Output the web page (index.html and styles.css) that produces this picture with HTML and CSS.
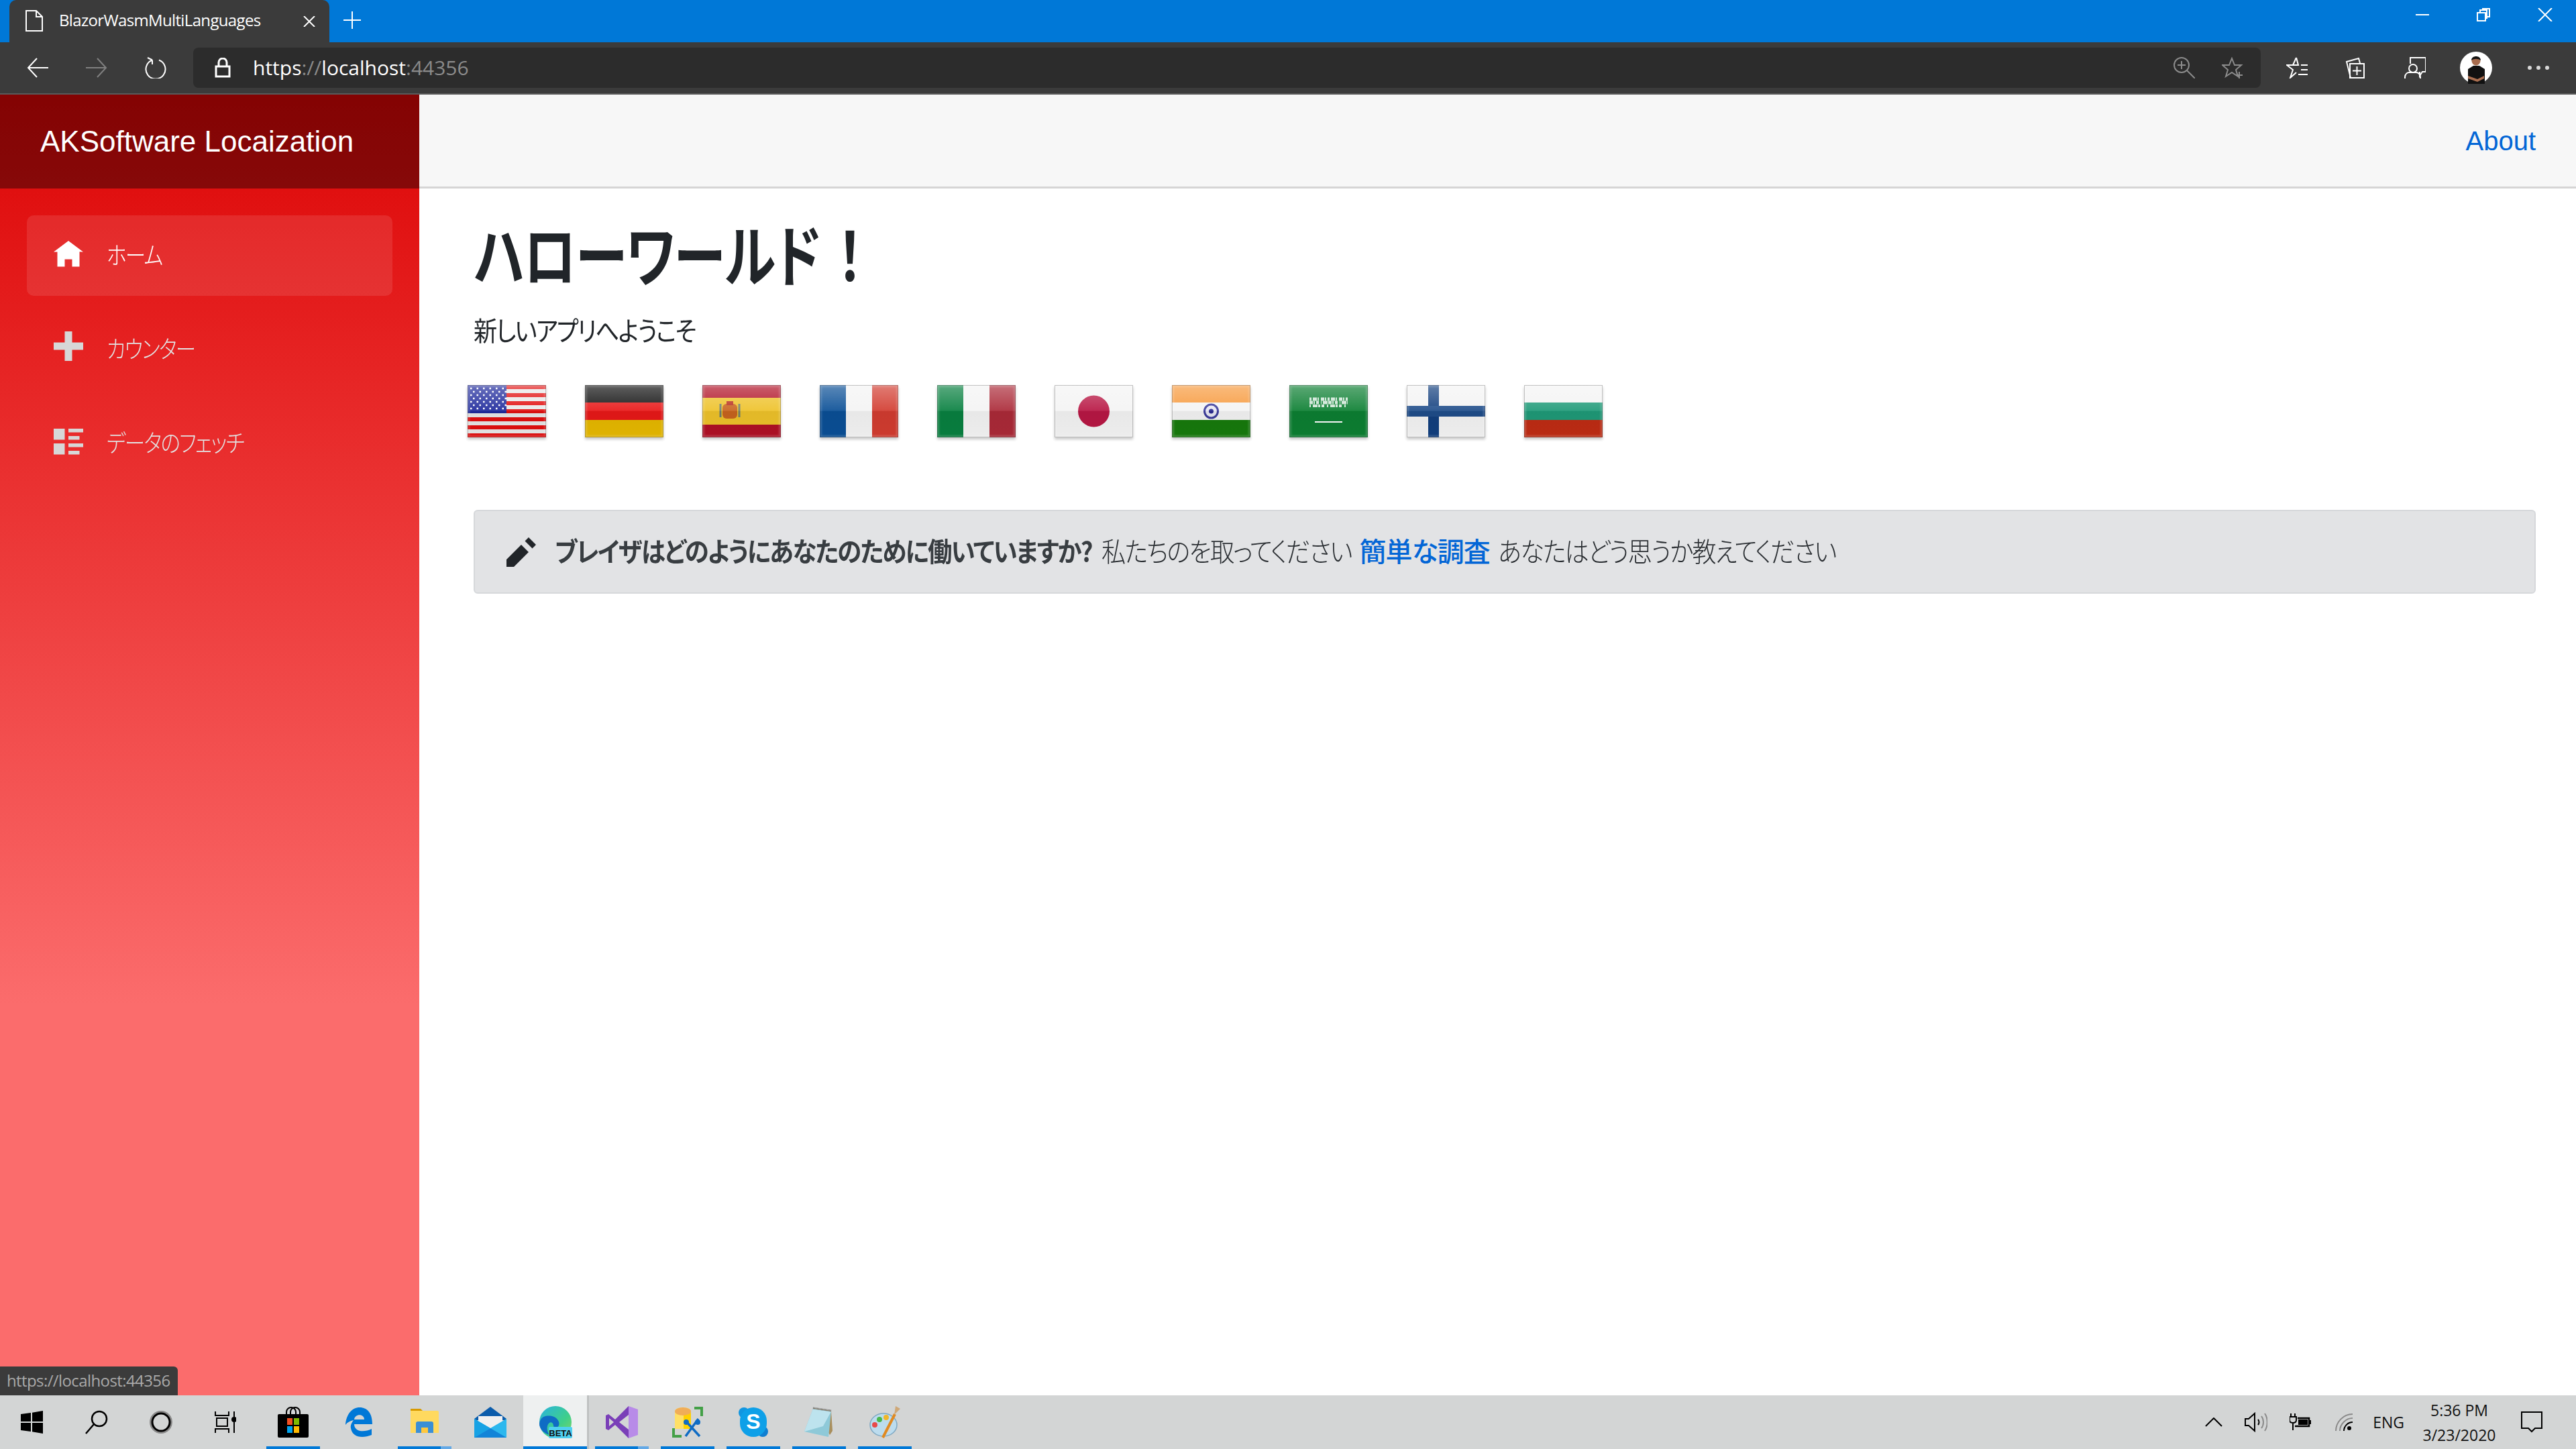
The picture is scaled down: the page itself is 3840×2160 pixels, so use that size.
FILE: index.html
```html
<!DOCTYPE html>
<html lang="ja">
<head>
<meta charset="utf-8">
<title>BlazorWasmMultiLanguages</title>
<link rel="stylesheet" href="styles.css">
</head>
<body>
<div class="tabbar">
  <div class="tab">
    <svg class="i-page" width="26" height="32" viewBox="0 0 26 32" fill="none" stroke="#fff" stroke-width="2"><path d="M1 1h15l9 9v21H1zM16 1v9h9"/></svg>
    <span class="tab-title">BlazorWasmMultiLanguages</span>
    <svg class="i-close" width="18" height="16" viewBox="0 0 18 16" fill="none" stroke="#fff" stroke-width="2"><path d="M1 0l16 16M17 0L1 16"/></svg>
  </div>
  <svg class="i-new" width="26" height="26" viewBox="0 0 26 26" fill="none" stroke="#fff" stroke-width="2"><path d="M13 0v26M0 13h26"/></svg>
  <div class="winctl">
    <svg width="20" height="20" viewBox="0 0 20 20" fill="#fff"><rect x="0" y="9" width="20" height="2"/></svg>
    <svg width="20" height="20" viewBox="0 0 20 20" fill="none" stroke="#fff" stroke-width="2"><path d="M1 7h12v12H1zM5 7V3h10v12h-2M8 1h11v12h-3"/></svg>
    <svg width="22" height="20" viewBox="0 0 22 20" fill="none" stroke="#fff" stroke-width="2"><path d="M1 0l20 20M21 0L1 20"/></svg>
  </div>
</div>

<div class="toolbar">
  <svg class="tb-icon" width="32" height="30" viewBox="0 0 32 30" fill="none" stroke="#fff" stroke-width="2"><path d="M15 1L2 15l13 14M2 15h30"/></svg>
  <svg class="tb-icon" width="32" height="30" viewBox="0 0 32 30" fill="none" stroke="#808080" stroke-width="2"><path d="M17 1l13 14-13 14M30 15H0"/></svg>
  <svg class="tb-icon" width="32" height="32" viewBox="0 0 32 32" fill="none" stroke="#fff" stroke-width="2"><path d="M21 4.500a14.500 14.500 0 1 1-10 0M11 4.500V11M4 1l7 3.500"/></svg>
  <div class="addr">
    <svg class="i-lock" width="24" height="30" viewBox="0 0 24 30" fill="none" stroke="#fff" stroke-width="3"><path d="M2 13h20v15H2zM6 13V7a6 6 0 0 1 12 0v6"/></svg>
    <span class="url"><span>https</span><span class="dim">://</span><span>localhost</span><span class="dim">:44356</span></span>
    <svg class="addr-end" width="32" height="32" viewBox="0 0 32 32" fill="none" stroke="#8b8b8b" stroke-width="2"><circle cx="12" cy="12" r="11"/><path d="M20 20l12 12M12 6v12M6 12h12"/></svg>
    <svg class="addr-star" width="32" height="32" viewBox="0 0 32 32" fill="none" stroke="#8b8b8b" stroke-width="2"><path d="M15 2l4 10h10l-8 7 3 10-9-6-9 6 3-10-8-7h10zM26 22v10M21 27h10"/></svg>
  </div>
  <svg class="tb-right" width="32" height="32" viewBox="0 0 32 32" fill="none" stroke="#fff" stroke-width="2"><path d="M15 1l3 11H1l9 7-4 12 9-8M22 12h10M22 19h10M18 26h14"/><path d="M15 1l-5 11"/></svg>
  <svg class="tb-right tb-coll" width="32" height="32" viewBox="0 0 32 32" fill="none" stroke="#fff" stroke-width="2"><path d="M8 31h2L4 7l18-5 2 7"/><path d="M9 10h21v21H9zM19.500 14v13M13 20.500h13"/></svg>
  <svg class="tb-right tb-feed" width="32" height="32" viewBox="0 0 32 32" fill="none" stroke="#fff" stroke-width="2"><path d="M9 10V1h23v21h-5l-4 6v-6"/><circle cx="13" cy="17" r="6"/><path d="M1 32v-2c0-5 4-7 6-7h11c3 0 6 3 6 7v2"/></svg>
  <svg class="avatar" width="48" height="48" viewBox="0 0 48 48"><circle cx="24" cy="24" r="24" fill="#fff"/><path d="M12 48V26l8-5h9l8 5v22z" fill="#111"/><circle cx="24" cy="14" r="6.500" fill="#a86d4f"/><path d="M17 13c0-8 14-8 14 0-4-3-10-3-14 0z" fill="#111"/><path d="M12 36l14 5 10-5v4l-10 5-14-5z" fill="#a86d4f"/></svg>
  <div class="dots"><i></i><i></i><i></i></div>
</div>

<div class="main">
  <aside class="sidebar">
    <div class="brand">AKSoftware Locaization</div>
    <nav class="nav">
      <a class="nav-item active"><svg class="nav-icon" viewBox="0 0 8 8"><path d="M4 0l-4 3h1v4h2v-2h2v2h2v-4.030l1 .03-4-3z"/></svg><span>ホーム</span></a>
      <a class="nav-item"><svg class="nav-icon nav-icon-up" viewBox="0 0 8 8"><path d="M3 0v3h-3v2h3v3h2v-3h3v-2h-3v-3h-2z"/></svg><span>カウンター</span></a>
      <a class="nav-item"><svg class="nav-icon" viewBox="0 0 8 8"><path d="M0 0v3h3v-3h-3zm4 0v1h4v-1h-4zm0 2v1h3v-1h-3zm-4 2v3h3v-3h-3zm4 0v1h4v-1h-4zm0 2v1h3v-1h-3z"/></svg><span>データのフェッチ</span></a>
    </nav>
  </aside>
  <section class="content">
    <header class="topbar"><a class="about">About</a></header>
    <div class="body">
      <h1 class="title">ハローワールド<span class="bang">！</span></h1>
      <p class="lead">新しいアプリへようこそ</p>
      <div class="flags">
        <div class="flag"><svg viewBox="0 0 117 78"><rect width="117" height="78" fill="#e8e8e8"/><path d="M0 3h117M0 15h117M0 27h117M0 39h117M0 51h117M0 63h117M0 75h117" stroke="#e20f0f" stroke-width="6"/><rect width="58" height="42" fill="#1f2a9c"/><path d="M4 5h54M8 10h50M4 15h54M8 20h50M4 25h54M8 30h50M4 35h54" stroke="#fff" stroke-width="2.500" stroke-dasharray="2.500 7"/></svg></div>
        <div class="flag"><svg viewBox="0 0 117 78"><rect width="117" height="26" fill="#111"/><rect y="26" width="117" height="26" fill="#e81818"/><rect y="52" width="117" height="26" fill="#e6b800"/></svg></div>
        <div class="flag"><svg viewBox="0 0 117 78"><rect width="117" height="78" fill="#b01025"/><rect y="19" width="117" height="40" fill="#eec22a"/><rect x="30" y="28" width="22" height="22" rx="6" fill="#c8641e"/><rect x="36" y="24" width="10" height="6" fill="#b83020"/><path d="M27 28v20M55 28v20" stroke="#708070" stroke-width="3"/></svg></div>
        <div class="flag"><svg viewBox="0 0 117 78"><rect width="39" height="78" fill="#0a4f96"/><rect x="39" width="39" height="78" fill="#f4f4f4"/><rect x="78" width="39" height="78" fill="#d23c30"/></svg></div>
        <div class="flag"><svg viewBox="0 0 117 78"><rect width="39" height="78" fill="#088040"/><rect x="39" width="39" height="78" fill="#f4f4f4"/><rect x="78" width="39" height="78" fill="#ab2a38"/></svg></div>
        <div class="flag"><svg viewBox="0 0 117 78"><rect width="117" height="78" fill="#f4f4f4"/><circle cx="58.500" cy="39" r="23.500" fill="#b81744"/></svg></div>
        <div class="flag"><svg viewBox="0 0 117 78"><rect width="117" height="26" fill="#f79a3e"/><rect y="26" width="117" height="26" fill="#f4f4f4"/><rect y="52" width="117" height="26" fill="#177a0c"/><circle cx="58.500" cy="39" r="10" fill="#e8e8f4" stroke="#3d3d9c" stroke-width="3"/><circle cx="58.500" cy="39" r="3.500" fill="#2a2a90"/></svg></div>
        <div class="flag"><svg viewBox="0 0 117 78"><rect width="117" height="78" fill="#0c7f32"/><g class="saudi" fill="none" stroke="#fff"><path d="M30 21h57" stroke-width="5" stroke-dasharray="3 2 6 1 2 3 5 1 2 2"/><path d="M30 26h57" stroke-width="5" stroke-dasharray="5 1 2 2 4 3 1 2 7 1"/><path d="M30 31h57" stroke-width="4" stroke-dasharray="2 3 7 1 3 2 4 4"/></g><path d="M38 55h36M74 55h5" stroke="#fff" stroke-width="2"/></svg></div>
        <div class="flag"><svg viewBox="0 0 117 78"><rect width="117" height="78" fill="#f4f4f4"/><rect x="32" width="16" height="78" fill="#123f7e"/><rect y="31" width="117" height="16" fill="#1f4d8a"/></svg></div>
        <div class="flag"><svg viewBox="0 0 117 78"><rect width="117" height="26" fill="#f4f4f4"/><rect y="26" width="117" height="26" fill="#1f9a78"/><rect y="52" width="117" height="26" fill="#bf2c14"/></svg></div>
      </div>
      <div class="alert">
        <svg class="alert-icon" viewBox="0 0 8 8"><path d="M6 0l-1 1 2 2 1-1-2-2zm-2 2l-4 4v2h2l4-4-2-2z"/></svg>
        <strong class="a-strong">ブレイザはどのようにあなたのために働いていますか?</strong>
        <span class="a-one">私たちのを取ってください</span>
        <a class="a-link">簡単な調査</a>
        <span class="a-two">あなたはどう思うか教えてください</span>
      </div>
    </div>
  </section>
</div>

<div class="status">https://localhost:44356</div>

<footer class="taskbar">
  <div class="sys"><svg width="34" height="34" viewBox="0 0 34 34" fill="#000"><path d="M0 5l15-2v13H0zM17 2.700L33 0v16H17zM0 18h15v13L0 29zM17 18h16v16l-16-2.700z"/></svg></div>
  <div class="sys"><svg width="34" height="36" viewBox="0 0 34 36" fill="none" stroke="#000" stroke-width="2.500"><circle cx="21" cy="13" r="11"/><path d="M13 21L1 35"/></svg></div>
  <div class="sys"><svg width="34" height="34" viewBox="0 0 34 34" fill="none"><circle cx="17" cy="17" r="15" stroke="#8a8a8a" stroke-width="4"/><circle cx="17" cy="17" r="13" stroke="#000" stroke-width="3"/></svg></div>
  <div class="sys"><svg width="32" height="32" viewBox="0 0 32 32" fill="none" stroke="#000" stroke-width="2"><path d="M1 0v6h20V0M3 10h16v12H3zM1 32v-6h20v6M29 0v8M29 16v16"/><circle cx="29" cy="12" r="3" fill="#000"/></svg></div>
  <div class="tasks">
    <div class="task on"><svg width="46" height="46" viewBox="0 0 46 46"><rect y="11" width="46" height="35" rx="2" fill="#000"/><path d="M13 14V8a7 7 0 0 1 14 0v6M19 14V8a7 7 0 0 1 14 0v6" fill="none" stroke="#000" stroke-width="2"/><rect x="14" y="17" width="8" height="10" fill="#f25022"/><rect x="24" y="17" width="8" height="10" fill="#7fba00"/><rect x="14" y="29" width="8" height="10" fill="#00a4ef"/><rect x="24" y="29" width="8" height="10" fill="#ffb900"/></svg></div>
    <div class="task"><svg width="40" height="44" viewBox="0 0 40 44"><path d="M0 26C1 10 10 0 21 0c12 0 19 9 19 25H13c0 11 14 13 26 7v9c-15 6-29 3-31-10-1-4 1-8 4-12-5 1-9 3-12 7zM13 18h15c0-9-14-9-15 0z" fill="#0078d7"/></svg></div>
    <div class="task on half"><svg width="42" height="48" viewBox="0 0 42 48"><path d="M0 4h15l3 3H0z" fill="#d89a00"/><path d="M0 7h40a2 2 0 0 1 2 2v31H0z" fill="#ffd95f"/><path d="M8 40V26c0-2 1-3 3-3h20c2 0 3 1 3 3v14h-8v-8H16v8z" fill="#3b8fd6"/><rect x="16" y="32" width="10" height="8" fill="#ffc83d"/></svg></div>
    <div class="task"><svg width="48" height="46" viewBox="0 0 48 46"><path d="M24 0l24 18v2H0v-2z" fill="#0b5cab"/><path d="M6 14h36v14L24 36 6 28z" fill="#f0f0f0"/><path d="M0 18l24 14 24-14v28H0z" fill="#2db8ee"/><path d="M0 18l24 14L0 46z" fill="#17a2e4"/><path d="M48 46H0l24-14 24 14z" fill="#1284d8"/></svg></div>
    <div class="task active"><svg width="50" height="48" viewBox="0 0 50 48"><defs><linearGradient id="eb" x1="0" y1="0" x2="1" y2="1"><stop offset="0" stop-color="#2ab3e0"/><stop offset=".6" stop-color="#3ecf8a"/><stop offset="1" stop-color="#86d562"/></linearGradient></defs><circle cx="25" cy="24" r="24" fill="url(#eb)"/><path d="M1 26C3 14 12 14 20 15c8 2 12 9 10 14-2 4-8 4-8 0 0-3-3-6-6-4-4 3-5 11 0 18C7 40 1 34 1 26z" fill="#0f6cc4"/><rect x="15" y="31" width="35" height="17" rx="2" fill="#4fd0f0"/><text x="32.500" y="44.500" class="beta">BETA</text></svg></div>
    <div class="task on half2"><svg width="48" height="48" viewBox="0 0 48 48"><path d="M34 0L14 20 4 12 0 14v20l4 2 10-8 20 20z" fill="#7a3fb8"/><path d="M5 18v12l7-6zM34 13v22L20 24z" fill="#d3d5d5"/><path d="M34 0l14 5v38l-14 5z" fill="#b88be8"/></svg></div>
    <div class="task on"><svg width="46" height="46" viewBox="0 0 46 46"><path d="M4 7c0-8 24-8 24 0v26H4z" fill="#ffe066"/><path d="M17 3c6 0 11 1 11 4v26H17z" fill="#ffd200"/><ellipse cx="16" cy="7" rx="12" ry="6" fill="#f0ad58"/><path d="M33 0h13v14h-4V4h-9zM0 32h4v10h10v4H0z" fill="#43a047"/><path d="M19 20l22 24M39 18L20 44" stroke="#0f6cc4" stroke-width="3.500" fill="none"/><circle cx="21" cy="23" r="4" fill="#0f6cc4"/><circle cx="38" cy="23" r="4" fill="#0f6cc4"/></svg></div>
    <div class="task on"><svg width="44" height="48" viewBox="0 0 44 48"><circle cx="8" cy="10" r="8" fill="#1296e0"/><circle cx="36" cy="38" r="8" fill="#0f7fd1"/><rect x="2" y="2" width="40" height="44" rx="20" fill="#0ea0e8"/><text x="22" y="34" class="skype">S</text></svg></div>
    <div class="task on"><svg width="44" height="46" viewBox="0 0 44 46"><path d="M13 2l27 4 2 30-4 6z" fill="#a98f5d"/><path d="M13 3l27 4-4 38L0 37z" fill="#8ec9d8"/><path d="M13 3l27 4-12 22-28 8z" fill="#bde3ee"/><path d="M13 2l27 4" stroke="#666" stroke-width="3" stroke-dasharray="1 1"/></svg></div>
    <div class="task on"><svg width="46" height="48" viewBox="0 0 46 48"><ellipse cx="21" cy="28" rx="20" ry="17" fill="#bcdcee" stroke="#7fa8c2" stroke-width="1.500"/><ellipse cx="27" cy="35" rx="5" ry="4" fill="#d3d5d5"/><circle cx="8" cy="28" r="4" fill="#e84a4a"/><circle cx="15" cy="20" r="4" fill="#4cb84c"/><circle cx="25" cy="17" r="4" fill="#f0b62a"/><path d="M38 12L20 47" stroke="#e08a22" stroke-width="4"/><path d="M37 13l2-13 7 4z" fill="#cfa877"/></svg></div>
  </div>
  <div class="tray">
    <svg class="t-chev" width="26" height="14" viewBox="0 0 26 14" fill="none" stroke="#000" stroke-width="2"><path d="M1 13L13 1l12 12"/></svg>
    <svg class="t-vol" width="34" height="30" viewBox="0 0 34 30" fill="none" stroke="#000" stroke-width="2"><path d="M1 10h5l9-8v26l-9-8H1z"/><path d="M20 11c2 2 2 6 0 8"/><path d="M25 6c4 5 4 13 0 18M30 2c5 7 5 19 0 26" stroke="#8a8a8a"/></svg>
    <svg class="t-bat" width="32" height="26" viewBox="0 0 32 26" fill="none"><path d="M2 0v5M8 0v5M0 5h10v5c0 3-2 4-5 4s-5-1-5-4zM5 14v11" stroke="#000" stroke-width="2"/><path d="M8 19h21V7H12" stroke="#000" stroke-width="2.500"/><rect x="13" y="9" width="14" height="8" fill="#000"/><rect x="30" y="10" width="2" height="6" fill="#000"/></svg>
    <svg class="t-wifi" width="26" height="26" viewBox="0 0 26 26" fill="none" stroke="#8a8a8a" stroke-width="2"><path d="M1 26C1 13 12 1 26 1M7 26C7 16 16 7 26 7"/><path d="M13 26c0-7 6-13 13-13" stroke="#000"/><circle cx="21" cy="22" r="3" fill="#000" stroke="none"/></svg>
    <span class="t-lang">ENG</span>
    <div class="t-clock"><span>5:36 PM</span><span>3/23/2020</span></div>
    <svg class="t-action" width="32" height="32" viewBox="0 0 32 32" fill="none" stroke="#000" stroke-width="2"><path d="M1 1h30v24H21l-5 5-5-5H1z"/></svg>
  </div>
</footer>
</body>
</html>
```

FILE: styles.css
```css
html, body { margin: 0; padding: 0; }
body {
  width: 3840px; height: 2160px; overflow: hidden; position: relative;
  display: flex; flex-direction: column;
  font-family: "Noto Sans CJK JP", "Liberation Sans", sans-serif;
  background: #fff;
}
svg { display: block; flex: none; }

.tabbar { height: 63px; background: #0078d7; display: flex; align-items: flex-start; flex: none; }
.tab {
  margin-left: 14px; width: 477px; height: 63px; background: #3b3b3b;
  border-radius: 10px 10px 0 0; display: flex; align-items: center; box-sizing: border-box;
  padding: 0 21px 0 24px; color: #fff;
}
.i-page { margin-bottom: 2px; }
.tab-title { font: 24px/30px "Open Sans", sans-serif; margin: 0 0 4px 24px; flex: 1; letter-spacing: -.65px; }
.i-new { margin: 17px 0 0 21px; }
.winctl { margin-left: auto; display: flex; gap: 71px; padding: 12px 35px 0 0; }

.toolbar {
  height: 76px; flex: none; background: #3b3b3b; border-bottom: 2px solid #5a5a5a;
  display: flex; align-items: center; padding: 0 40px; box-sizing: content-box;
}
.tb-icon { margin-right: 56px; }
.addr {
  margin: 0 38px 0 -16px; flex: 1; height: 60px; background: #2c2c2c; border-radius: 8px;
  display: flex; align-items: center; padding-left: 32px; box-sizing: border-box;
}
.url { font: 30px/40px "Open Sans", sans-serif; color: #fff; margin-left: 33px; }
.dim { color: #8b8b8b; }
.addr-end { margin-left: auto; }
.addr-star { margin: 0 26px 0 40px; }
.tb-right { margin-right: 54px; }
.tb-coll { margin-right: 58px; }
.tb-feed { margin-right: 53px; }
.avatar { margin-right: 53px; margin-left: -2px; }
.dots { display: flex; gap: 7px; }
.dots i { width: 6px; height: 6px; border-radius: 50%; background: #d8d8d8; }

.main { flex: 1; display: grid; grid-template-columns: 625px 1fr; min-height: 0; }
.sidebar { background: linear-gradient(180deg, #dd0505 0%, #fb6c6c 70%); }
.brand {
  height: 140px; box-sizing: border-box; background: rgba(0,0,0,.4); padding-left: 60px;
  display: flex; align-items: center; color: #fff; font: 44px/1 "Liberation Sans", sans-serif;
}
.nav { padding: 40px 40px 0; display: flex; flex-direction: column; gap: 20px; }
.nav-item {
  height: 120px; border-radius: 10px; display: flex; align-items: center; padding-left: 40px;
  color: #e2e2e2; font-size: 36px; font-weight: 300; font-feature-settings: "palt"; letter-spacing: -2px;
}
.nav-item.active { background: rgba(255,255,255,.1); color: #fff; }
.nav-icon { width: 44px; height: 44px; fill: #d7d7d7; margin-right: 35px; }
.active .nav-icon { fill: #fff; }
.nav-icon-up { margin-top: -10px; }
.nav-item span { position: relative; top: -3px; transform: scaleX(.85); transform-origin: left center; }

.content { display: flex; flex-direction: column; min-width: 0; }
.topbar {
  height: 137px; background: #f7f7f7; border-bottom: 3px solid #d6d5d5; display: flex; align-items: center;
  justify-content: flex-end; padding-right: 60px; flex: none;
}
.about { font: 40px/1 "Liberation Sans", sans-serif; color: #0366d6; }
.body { padding: 0 60px 0 81px; color: #212529; font-feature-settings: "palt"; }
.title {
  margin: 35px 0 0; font-size: 100px; line-height: 120px; font-weight: 700; letter-spacing: -1px;
  transform: scaleX(.78); transform-origin: left center; white-space: nowrap;
}
.bang { font-feature-settings: normal; margin-left: 6px; }
.lead {
  margin: 25px 0 0; font-size: 40px; line-height: 60px; font-weight: 400; letter-spacing: -2px;
  transform: scaleX(.88); transform-origin: left center; white-space: nowrap;
}
.flags { display: flex; gap: 58px; margin: 53px 0 0 -9px; }
.flag {
  width: 117px; height: 78px; position: relative; flex: none;
  box-shadow: 0 3px 4px rgba(0,0,0,.22);
}
.flag svg { width: 117px; height: 78px; filter: blur(.7px); }
.saudi { opacity: .8; }
.flag::after {
  content: ""; position: absolute; inset: 0;
  background: linear-gradient(180deg, rgba(255,255,255,.33) 0%, rgba(255,255,255,.08) 49%, rgba(0,0,0,.05) 50%, rgba(0,0,0,.03) 100%);
  box-shadow: inset 0 0 0 1px rgba(0,0,0,.22), inset 0 0 3px 3px rgba(255,255,255,.18);
}
.alert {
  margin-top: 108px; height: 125px; box-sizing: border-box; background: #e2e3e5; border: 2.5px solid #d6d8db;
  border-radius: 6px; display: flex; align-items: center; padding-left: 47px; color: #2b2f33; font-size: 40px;
  white-space: nowrap;
}
.alert-icon { width: 44px; height: 44px; fill: #212529; margin-right: 28px; }
.a-strong, .a-one, .a-two { transform-origin: left center; letter-spacing: -2px; position: relative; top: -3px; }
.a-strong { font-weight: 700; color: #383d41; transform: scaleX(.91); margin-right: -79px; }
.a-one { font-weight: 300; margin: 0 -39px 0 14px; transform: scaleX(.905); }
.a-link { font-weight: 500; color: #0366d6; margin-left: 12px; letter-spacing: -1px; position: relative; top: -3px; }
.a-two { font-weight: 300; margin: 0 -54px 0 12px; transform: scaleX(.903); }

.status {
  position: absolute; left: 0; top: 2037px; width: 265px; height: 43px; box-sizing: border-box;
  background: #3b3b3b; color: #a9a9a9; border-radius: 0 6px 0 0; padding-left: 10px;
  font: 24px/42px "Open Sans", sans-serif; letter-spacing: -.6px;
}

.taskbar { height: 80px; flex: none; background: #d3d5d5; display: flex; align-items: stretch; }
.sys { width: 96px; display: flex; align-items: center; justify-content: center; }
.tasks { display: flex; margin-left: 4px; }
.task { width: 98px; display: flex; align-items: center; justify-content: center; position: relative; box-sizing: border-box; }
.task.on::after, .task.active::after {
  content: ""; position: absolute; left: 9px; right: 9px; bottom: 0; height: 4px; background: #0078d7;
}
.task.half::after { background: linear-gradient(90deg, #0078d7 80%, #64a9e6 80%); }
.task.half2::after { background: linear-gradient(90deg, #0078d7 80%, #64a9e6 80%); }
.task.active { background: #eef0f0; border-right: 3px solid #bfc1c1; }
.task.active::after { left: 0; right: 0; }
.beta { font: 700 13px "Liberation Sans", sans-serif; fill: #111; text-anchor: middle; }
.skype { font: 700 32px "Liberation Sans", sans-serif; fill: #fff; text-anchor: middle; }

.tray { margin-left: auto; display: flex; align-items: center; padding-right: 50px; }
.t-vol { margin-left: 33px; }
.t-bat { margin-left: 33px; }
.t-wifi { margin-left: 36px; }
.t-lang { font: 23px "Open Sans", sans-serif; color: #111; margin-left: 30px; }
.t-clock {
  display: flex; flex-direction: column; align-items: center; width: 106px; margin-left: 29px; gap: 11px;
  font: 23px/26px "Open Sans", sans-serif; color: #111; white-space: nowrap;
}
.t-action { margin-left: 39px; }
```
